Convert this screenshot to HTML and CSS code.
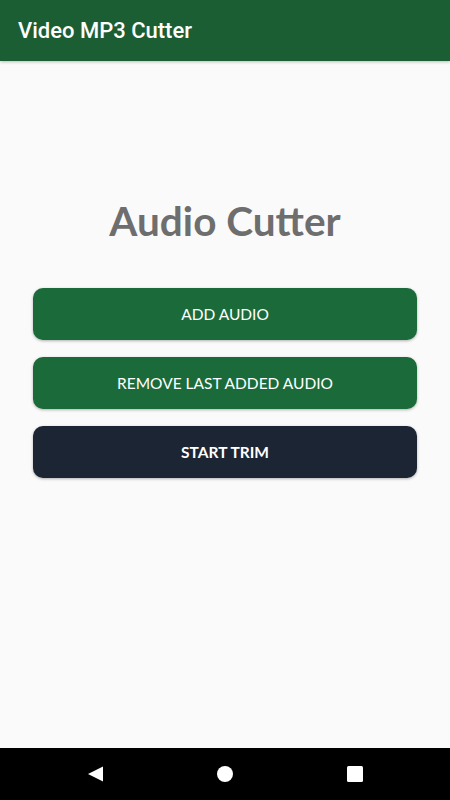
FILE: index.html
```html
<!DOCTYPE html>
<html lang="en">
<head>
    <meta charset="UTF-8">
    <meta name="viewport" content="width=device-width, initial-scale=1.0">
    <title>Video MP3 Cutter</title>
    <link rel="stylesheet" href="styles.css">
</head>
<body>
    <div class="screen">
        <!-- Верхняя панель -->
        <header class="app-bar">Video MP3 Cutter</header>

        <main class="content">
            <h1 class="title">Audio Cutter</h1>
            <button class="btn btn-green">ADD AUDIO</button>
            <button class="btn btn-green">REMOVE LAST ADDED AUDIO</button>
            <button class="btn btn-dark">START TRIM</button>
        </main>

        <!-- Системная навигация -->
        <nav class="nav-bar">
            <svg class="nav-icon" width="16" height="16" viewBox="0 0 16 16"><polygon points="16,0.5 16,15.5 1,8" fill="#fff"/></svg>
            <svg class="nav-icon" width="16" height="16" viewBox="0 0 16 16"><circle cx="8" cy="8" r="8" fill="#fff"/></svg>
            <svg class="nav-icon" width="16" height="16" viewBox="0 0 16 16"><rect x="0" y="0" width="16" height="16" rx="1.5" fill="#fff"/></svg>
        </nav>
    </div>
</body>
</html>
```
FILE: styles.css
```css
body { margin: 0; background: #fafafa; }
.screen { width: 450px; height: 800px; display: flex; flex-direction: column; }
.app-bar { height: 61px; background: #1b5e33; color: #fff; font-family: Roboto, sans-serif; font-weight: 500; font-size: 22px; display: flex; align-items: center; padding-left: 18px; box-shadow: 0 1px 3px rgba(0,0,0,0.25); }
.content { flex: 1; display: flex; flex-direction: column; align-items: center; padding: 0 33px; }
.title { font-family: Lato, sans-serif; font-weight: 700; font-size: 40.5px; color: #6e6e6e; margin: 133px 0 40px; line-height: 54px; }
.btn { width: 100%; height: 52px; border: none; border-radius: 10px; color: #fff; font-family: Lato, sans-serif; font-size: 15.5px; margin-bottom: 17px; box-shadow: 0 1px 3px rgba(0,0,0,0.3); }
.btn-green { background: #1b6b3a; }
.btn-dark { background: #1c2534; font-weight: 700; }
.nav-bar { height: 52px; background: #000; display: flex; justify-content: center; gap: 114px; align-items: center; }
.nav-icon { display: block; }
```
